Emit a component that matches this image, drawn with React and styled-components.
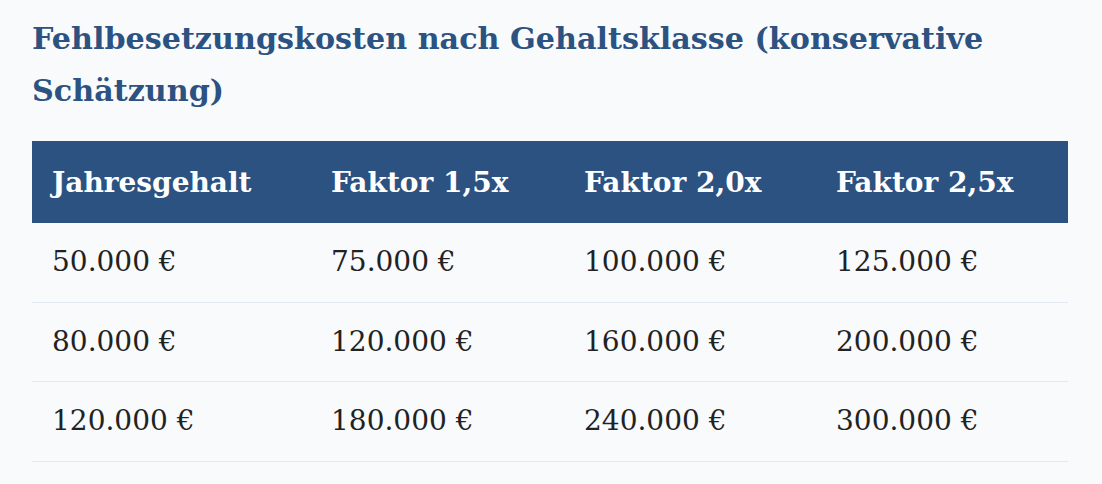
import styled, { createGlobalStyle } from "styled-components";

const GlobalStyle = createGlobalStyle`
  html, body {
    margin: 0;
    padding: 0;
    background: #f8fafc;
  }
  body {
    font-family: 'DejaVu Serif', serif;
  }
`;

const Page = styled.div`
  padding: 13px 34px 0 32px;
`;

const Title = styled.h2`
  margin: 0 0 24px;
  font-size: 30.2px;
  line-height: 52px;
  font-weight: bold;
  color: #2c5282;
`;

const Table = styled.table`
  width: 100%;
  border-collapse: collapse;
  table-layout: fixed;
`;

const Th = styled.th`
  box-sizing: border-box;
  text-align: left;
  background: #2c5282;
  color: #fff;
  font-size: 28px;
  font-weight: bold;
  line-height: 39px;
  padding: 22px 20px 21px;
  width: ${(p) => p.$w}px;
`;

const Td = styled.td`
  font-size: 28px;
  line-height: 38.5px;
  color: #222;
  padding: 20px;
  border-bottom: 1px solid #e2e8f0;
`;

const cols = [
  { label: "Jahresgehalt", w: 279 },
  { label: "Faktor 1,5x", w: 253 },
  { label: "Faktor 2,0x", w: 252 },
  { label: "Faktor 2,5x", w: 252 },
];

const rows = [
  ["50.000 €", "75.000 €", "100.000 €", "125.000 €"],
  ["80.000 €", "120.000 €", "160.000 €", "200.000 €"],
  ["120.000 €", "180.000 €", "240.000 €", "300.000 €"],
];

export default function App() {
  return (
    <Page>
      <GlobalStyle />
      <Title>Fehlbesetzungskosten nach Gehaltsklasse (konservative Schätzung)</Title>
      <Table>
        <thead>
          <tr>
            {cols.map((c) => (
              <Th key={c.label} $w={c.w}>{c.label}</Th>
            ))}
          </tr>
        </thead>
        <tbody>
          {rows.map((r, i) => (
            <tr key={i}>
              {r.map((v, j) => (
                <Td key={j}>{v}</Td>
              ))}
            </tr>
          ))}
        </tbody>
      </Table>
    </Page>
  );
}
